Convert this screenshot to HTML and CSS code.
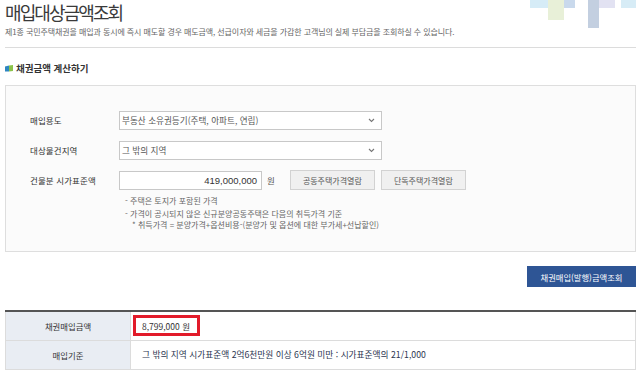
FILE: index.html
```html
<!DOCTYPE html>
<html lang="ko">
<head>
<meta charset="utf-8">
<title>매입대상금액조회</title>
<link rel="stylesheet" href="styles.css">
</head>
<body>
<div class="page">
  <header class="head">
    <div class="deco">
      <span class="d d1"></span><span class="d d2"></span><span class="d d3"></span>
      <span class="d d4"></span><span class="d d5"></span><span class="d d6"></span>
    </div>
    <h1 class="title">매입대상금액조회</h1>
    <p class="sub">제1종 국민주택채권을 매입과 동시에 즉시 매도할 경우 매도금액, 선급이자와 세금을 가감한 고객님의 실제 부담금을 조회하실 수 있습니다.</p>
  </header>

  <h2 class="sec">
    <svg class="sec-ico" width="8" height="7" viewBox="0 0 8 7"><path d="M0 1.5 L4 0.5 L4 6.5 L0 6.5 Z" fill="#2e86c1"/><path d="M4 0.5 L8 0 L8 6 L4 6.5 Z" fill="#8bc34a"/></svg>
    채권금액 계산하기
  </h2>

  <div class="box">
    <div class="row">
      <span class="lbl">매입용도</span>
      <div class="sel"><span>부동산 소유권등기(주택, 아파트, 연립)</span>
        <svg class="chev" width="7" height="5" viewBox="0 0 7 5"><path d="M1 1 L3.5 3.5 L6 1" fill="none" stroke="#777" stroke-width="1.1"/></svg>
      </div>
    </div>
    <div class="row">
      <span class="lbl">대상물건지역</span>
      <div class="sel"><span>그 밖의 지역</span>
        <svg class="chev" width="7" height="5" viewBox="0 0 7 5"><path d="M1 1 L3.5 3.5 L6 1" fill="none" stroke="#777" stroke-width="1.1"/></svg>
      </div>
    </div>
    <div class="row">
      <span class="lbl">건물분 시가표준액</span>
      <div class="inp">419,000,000</div>
      <span class="won">원</span>
      <span class="btn">공동주택가격열람</span>
      <span class="btn">단독주택가격열람</span>
    </div>
    <div class="notes">
      <p class="n1">- 주택은 토지가 포함된 가격</p>
      <p class="n2">- 가격이 공시되지 않은 신규분양공동주택은 다음의 취득가격 기준</p>
      <p class="n3">* 취득가격 = 분양가격+옵션비용-(분양가 및 옵션에 대한 부가세+선납할인)</p>
    </div>
  </div>

  <div class="actions">
    <span class="primary">채권매입(발행)금액조회</span>
  </div>

  <table class="result">
    <tr>
      <th>채권매입금액</th>
      <td><span class="hl">8,799,000 원</span></td>
    </tr>
    <tr>
      <th>매입기준</th>
      <td class="basis">그 밖의 지역 시가표준액 2억6천만원 이상 6억원 미만 : 시가표준액의 21/1,000</td>
    </tr>
  </table>
</div>
</body>
</html>
```
FILE: styles.css
```css
* { box-sizing: border-box; }
html, body { margin: 0; padding: 0; background: #fff; }
body {
  font-family: "Noto Sans CJK KR", "Noto Sans", sans-serif;
  color: #333;
}
.page { padding: 0 4px 0 5px; width: 640px; }

.head {
  position: relative;
  height: 48px;
  border-bottom: 1px solid #dcdcdc;
}
.deco { position: absolute; top: 0; left: 525px; width: 110px; height: 30px; }
.d { position: absolute; top: 0; display: block; }
.d1 { left: 0; width: 18px; height: 8px; background: #d6ecf7; }
.d2 { left: 18px; width: 16px; height: 20px; background: #e8f0d8; }
.d3 { left: 34px; width: 11px; height: 8px; background: #c9d9ec; }
.d4 { left: 58px; width: 11px; height: 28px; background: #c3cfe0; }
.d5 { left: 69px; width: 16px; height: 8px; background: #e2e2f2; }
.d6 { left: 91px; width: 15px; height: 8px; background: #d7ecf6; }

.title {
  margin: 0;
  font-size: 18px;
  font-weight: 400;
  line-height: 24px;
  letter-spacing: -1.9px;
  color: #3a3a3a;
}
.sub {
  margin: 2px 0 0;
  font-size: 8px;
  line-height: 12px;
  letter-spacing: -0.1px;
  color: #666;
  white-space: nowrap;
}

.sec {
  margin: 14px 0 11px;
  font-size: 9.5px;
  line-height: 12px;
  font-weight: 700;
  color: #333;
  display: flex;
  align-items: center;
  gap: 3px;
}
.sec-ico { display: block; }

.box {
  border: 1px solid #dedede;
  background: #fbfbfb;
  height: 167px;
  padding: 24px 0 0 24px;
}
.row {
  display: flex;
  align-items: center;
  height: 20px;
  margin-bottom: 10px;
}
.row:nth-child(3) { margin-bottom: 0; }
.lbl {
  width: 89px;
  font-size: 8.5px;
  letter-spacing: 0.1px;
  color: #333;
}
.sel {
  width: 263px;
  height: 19px;
  border: 1px solid #c8c8c8;
  background: #fff;
  display: flex;
  align-items: center;
  justify-content: space-between;
  padding: 0 6px 0 2px;
  font-size: 8.6px;
  color: #555;
}
.chev { display: block; }
.inp {
  width: 143px;
  height: 19px;
  border: 1px solid #c8c8c8;
  background: #fff;
  font-family: "Liberation Sans", Arial, sans-serif;
  font-size: 9.5px;
  line-height: 17px;
  text-align: right;
  padding-right: 4px;
  color: #333;
}
.won { margin: 0 15px 0 5px; font-size: 8.5px; color: #555; }
.btn {
  height: 20px;
  width: 85px;
  border: 1px solid #d2d2d2;
  background: #f0f0f0;
  font-size: 8px;
  color: #555;
  display: flex;
  align-items: center;
  justify-content: center;
  margin-right: 6px;
}
.notes { padding-left: 95px; margin-top: 5px; color: #666; font-size: 8px; }
.notes p { margin: 0; white-space: nowrap; }
.n1 { line-height: 11px; }
.n2 { line-height: 11px; margin-top: 2px !important; }
.n3 { line-height: 11px; padding-left: 7px; }

.actions {
  display: flex;
  justify-content: flex-end;
  margin-top: 14px;
}
.primary {
  width: 109px;
  height: 21px;
  background: #2e5595;
  color: #fff;
  font-size: 8.3px;
  display: flex;
  align-items: center;
  justify-content: center;
}

.result {
  margin-top: 23px;
  width: 100%;
  border-collapse: collapse;
  border-top: 2px solid #555;
  border-left: 1px solid #dcdcdc;
  border-right: 1px solid #dcdcdc;
}
.result th, .result td {
  height: 29px;
  border-bottom: 1px solid #dcdcdc;
  font-size: 8.4px;
  padding: 0;
}
.result th {
  width: 125px;
  background: #e9edf3;
  font-weight: 400;
  color: #333;
  text-align: center;
  border-right: 1px solid #dcdcdc;
}
.result td { padding-left: 2px; background: #fff; }
.hl {
  display: inline-flex;
  align-items: center;
  height: 21px;
  width: 67px;
  border: 3px solid #e21b2a;
  padding-left: 6px;
  font-size: 8.5px;
  color: #333;
}
.result td.basis { padding-left: 11px; color: #2b3550; font-size: 8.7px; }
```
